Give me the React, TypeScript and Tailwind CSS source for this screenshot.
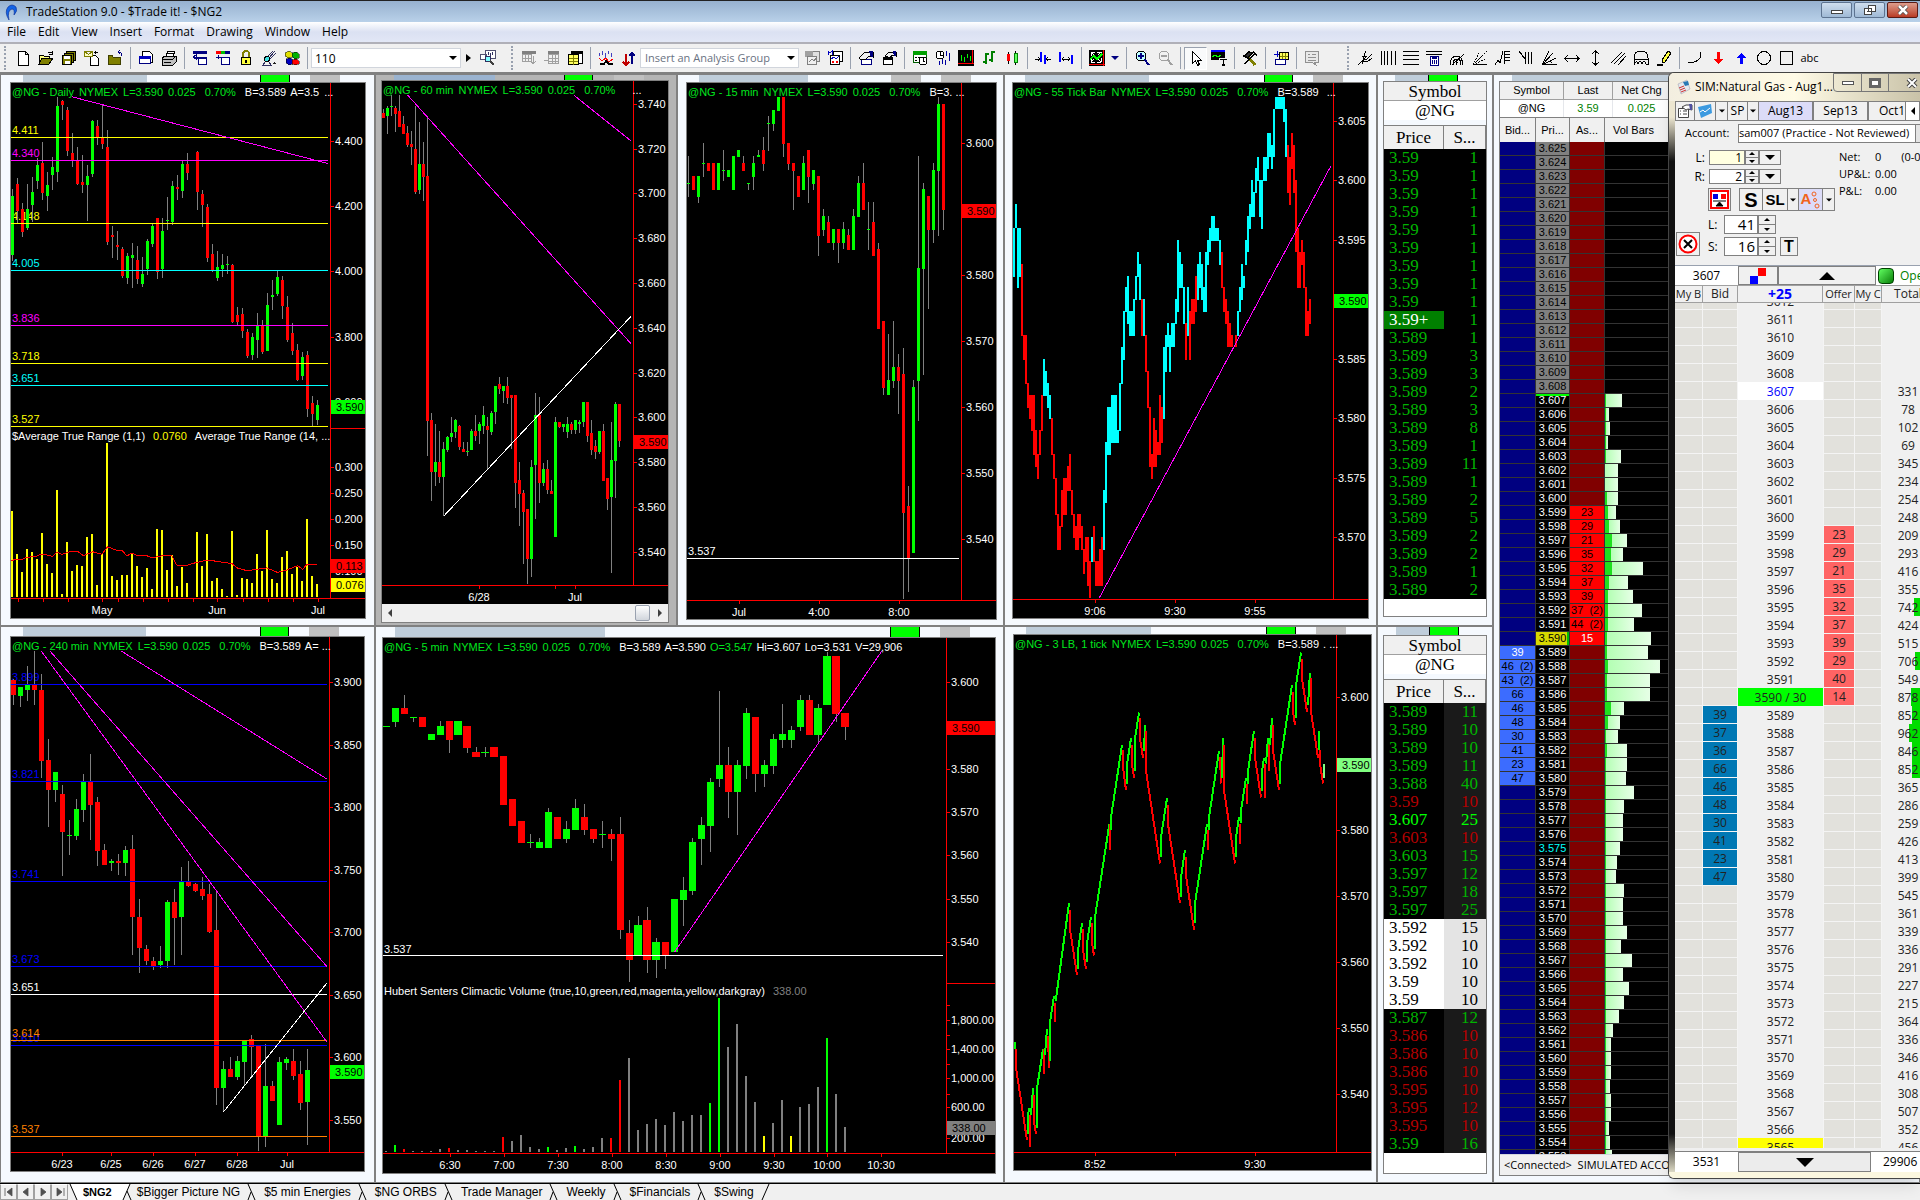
import { CSSProperties, ReactNode } from "react";

/* ---------- shared types and colours ---------- */

type Candle = [x: number, top: number, bottom: number, high: number, low: number, up: 0 | 1];
type Bar = [x: number, top: number, bottom: number, color: string];
type Line = [x1: number, y1: number, x2: number, y2: number, color: string];
type Mark = [pos: number, label: string];
type Level = [y: number, label: string, color: string];
type Tag = [y: number, label: string, fill: string];
type Segment = [gap: number, width: number, color: string];

const GREEN = "#00ff00";
const RED = "#ff0000";
const CYAN = "#00ffff";
const MAGENTA = "#ff00ff";
const YELLOW = "#ffff00";
const GRAY = "#808080";

const STEEL = "#bfcdda";
const SILVER = "#c0c0c0";

/* ---------- chart data, in plot units ---------- */

const dailyCandles: Candle[] = [
  [38, 352, 518, 333, 535, 1], [53, 319, 395, 302, 428, 0], [68, 389, 454, 372, 468, 0], [83, 389, 442, 319, 447, 1],
  [98, 342, 377, 300, 425, 1], [113, 266, 310, 246, 333, 1], [128, 260, 343, 202, 363, 0], [143, 322, 352, 286, 394, 1],
  [158, 272, 293, 244, 335, 1], [173, 101, 285, 76, 314, 1], [188, 87, 97, 84, 139, 0], [203, 112, 227, 104, 240, 0],
  [218, 232, 253, 177, 272, 0], [233, 253, 318, 216, 322, 0], [248, 314, 321, 238, 344, 0], [263, 297, 321, 266, 423, 1],
  [278, 143, 290, 140, 300, 1], [293, 157, 188, 140, 210, 0], [308, 188, 206, 96, 220, 0], [323, 216, 481, 168, 490, 0],
  [338, 462, 467, 437, 526, 0], [353, 489, 495, 451, 531, 0], [368, 501, 576, 496, 582, 0], [383, 521, 581, 512, 599, 1],
  [398, 518, 525, 484, 610, 1], [413, 532, 584, 493, 599, 0], [428, 571, 599, 524, 607, 1], [443, 479, 557, 473, 574, 1],
  [458, 437, 486, 430, 496, 1], [473, 414, 566, 414, 584, 0], [488, 451, 557, 414, 582, 1], [503, 420, 423, 355, 448, 1],
  [518, 325, 426, 311, 433, 1], [533, 328, 333, 294, 364, 0], [548, 263, 339, 255, 357, 1], [563, 263, 287, 232, 308, 0],
  [593, 230, 342, 226, 391, 0], [608, 347, 377, 336, 440, 0], [623, 384, 525, 375, 538, 0], [638, 515, 560, 487, 565, 0],
  [653, 552, 582, 507, 591, 1], [668, 546, 557, 515, 580, 1], [683, 543, 546, 521, 571, 1], [698, 546, 706, 543, 708, 0],
  [713, 686, 706, 664, 714, 0], [728, 683, 730, 666, 750, 0], [743, 734, 801, 725, 806, 0], [758, 748, 798, 736, 812, 1],
  [773, 717, 756, 680, 806, 1], [788, 714, 790, 700, 795, 0], [803, 658, 787, 624, 787, 1], [818, 630, 635, 588, 672, 1],
  [833, 580, 627, 563, 633, 1], [848, 588, 660, 577, 697, 0], [863, 664, 756, 633, 762, 0], [878, 736, 787, 708, 797, 0],
  [893, 784, 867, 767, 871, 0], [908, 804, 857, 790, 867, 1], [923, 798, 949, 787, 972, 0], [938, 932, 963, 913, 997, 0],
  [953, 938, 980, 924, 994, 1],
];

const atrTops: [number, number][] = [
  [36, 1235], [51, 1356], [66, 1406], [81, 1341], [96, 1350], [111, 1369], [126, 1296], [141, 1383], [156, 1408],
  [171, 1176], [186, 1467], [201, 1322], [216, 1403], [231, 1386], [246, 1389], [261, 1308], [276, 1299], [291, 1442],
  [306, 1355], [321, 1044], [336, 1417], [351, 1428], [366, 1414], [381, 1414], [396, 1352], [411, 1389], [426, 1420],
  [441, 1394], [456, 1453], [471, 1285], [486, 1288], [501, 1400], [516, 1358], [531, 1445], [546, 1392], [561, 1436],
  [591, 1294], [606, 1389], [621, 1299], [636, 1431], [651, 1422], [666, 1453], [681, 1473], [696, 1291], [711, 1470],
  [726, 1422], [741, 1425], [756, 1436], [771, 1355], [786, 1403], [801, 1288], [816, 1425], [831, 1436], [846, 1364],
  [861, 1347], [876, 1411], [891, 1392], [906, 1431], [921, 1257], [936, 1417], [951, 1439],
];

const atrAverage =
  "33,1374 48,1370 66,1370 81,1364 105,1363 126,1355 158,1362 171,1350 186,1356 216,1347 233,1348 250,1360 278,1349 306,1356 323,1335 350,1345 366,1345 381,1361 396,1352 411,1360 440,1360 458,1366 486,1360 516,1360 530,1386 561,1387 576,1382 623,1372 696,1382 711,1394 741,1402 756,1400 800,1394 833,1407 860,1400 893,1388 908,1398 921,1384 951,1384";

const hourCandles: Candle[] = [
  [33, 120, 134, 108, 134, 0], [43, 106, 129, 100, 179, 1], [52, 101, 104, 70, 130, 1], [62, 106, 123, 100, 174, 0],
  [72, 115, 159, 70, 160, 0], [82, 151, 179, 130, 180, 0], [92, 176, 210, 157, 215, 0], [101, 207, 215, 170, 266, 0],
  [111, 222, 342, 100, 347, 0], [121, 263, 336, 146, 347, 1], [131, 263, 300, 202, 366, 0], [141, 297, 983, 134, 1080, 0],
  [151, 980, 1126, 960, 1206, 0], [160, 1098, 1126, 990, 1164, 1], [170, 1098, 1140, 1011, 1156, 0], [180, 1061, 1140, 1042, 1250, 1],
  [190, 1028, 1064, 1024, 1070, 1], [199, 1016, 1028, 972, 1042, 1], [209, 980, 1014, 976, 1030, 1], [219, 997, 1056, 995, 1064, 0],
  [229, 1062, 1070, 1042, 1070, 0], [239, 1067, 1070, 1042, 1080, 1], [249, 1011, 1064, 1005, 1064, 1], [258, 1011, 1024, 966, 1038, 0],
  [268, 991, 1011, 986, 1047, 1], [278, 966, 997, 941, 1019, 1], [288, 997, 1008, 972, 1117, 0], [298, 960, 1014, 955, 1022, 1],
  [308, 885, 958, 885, 990, 1], [317, 879, 893, 860, 907, 0], [327, 885, 899, 885, 932, 1], [337, 885, 918, 860, 935, 0],
  [347, 910, 918, 910, 1062, 0], [357, 910, 1156, 910, 1225, 0], [366, 1148, 1187, 1098, 1277, 0], [376, 1184, 1238, 1176, 1382, 0],
  [386, 1229, 1369, 1229, 1438, 0], [396, 1112, 1369, 1092, 1420, 1], [406, 966, 1106, 904, 1257, 1], [415, 966, 1156, 915, 1212, 0],
  [425, 1117, 1156, 1100, 1166, 1], [435, 1117, 1176, 1092, 1187, 0], [445, 1179, 1187, 1148, 1187, 0], [454, 986, 1307, 972, 1307, 1],
  [464, 986, 1000, 986, 1002, 0], [474, 991, 1000, 991, 1014, 1], [484, 991, 1014, 972, 1030, 1], [494, 991, 1008, 986, 1019, 0],
  [504, 980, 1008, 980, 1019, 1], [513, 986, 991, 980, 1016, 1], [523, 930, 986, 930, 1000, 1], [533, 930, 1025, 930, 1042, 0],
  [543, 1016, 1064, 980, 1078, 0], [553, 1053, 1070, 1035, 1089, 0], [562, 1011, 1070, 1011, 1075, 1], [572, 1011, 1151, 990, 1151, 0],
  [582, 1142, 1200, 1142, 1232, 0], [592, 1092, 1195, 986, 1408, 1], [602, 935, 1095, 930, 1198, 1], [611, 935, 1039, 935, 1056, 0],
];

const quarterCandles: Candle[] = [
  [780, 316, 319, 241, 356, 1], [792, 297, 336, 297, 336, 0], [804, 297, 356, 297, 372, 1], [817, 260, 263, 204, 300, 1],
  [829, 260, 283, 260, 283, 0], [841, 260, 336, 260, 336, 0], [853, 260, 336, 260, 336, 1], [866, 280, 284, 224, 311, 1],
  [878, 280, 300, 280, 300, 1], [890, 241, 336, 241, 336, 1], [902, 224, 244, 224, 244, 1], [915, 260, 283, 241, 283, 0],
  [927, 316, 319, 316, 336, 1], [939, 260, 300, 241, 336, 1], [951, 239, 243, 223, 243, 1], [964, 223, 263, 188, 283, 0],
  [976, 148, 151, 130, 227, 1], [988, 111, 151, 111, 171, 1], [1001, 76, 115, 76, 115, 1], [1013, 76, 207, 76, 244, 0],
  [1025, 204, 263, 204, 280, 0], [1037, 260, 284, 260, 392, 0], [1049, 297, 355, 297, 355, 0], [1062, 260, 336, 241, 336, 1],
  [1074, 224, 300, 224, 372, 0], [1086, 280, 319, 280, 336, 1], [1098, 297, 465, 297, 521, 0], [1111, 409, 448, 389, 465, 1],
  [1123, 426, 484, 409, 484, 0], [1135, 445, 484, 445, 504, 1], [1147, 445, 484, 445, 540, 0], [1160, 445, 484, 426, 500, 1],
  [1172, 462, 504, 445, 504, 0], [1184, 409, 504, 389, 504, 1], [1197, 316, 412, 297, 412, 1], [1209, 316, 392, 260, 392, 0],
  [1221, 445, 448, 370, 504, 1], [1233, 426, 521, 370, 521, 0], [1245, 501, 725, 484, 725, 0], [1258, 703, 890, 703, 909, 0],
  [1270, 868, 909, 738, 909, 1], [1282, 832, 871, 703, 890, 1], [1294, 832, 871, 795, 963, 0], [1307, 851, 1240, 778, 1481, 0],
  [1319, 1221, 1366, 1165, 1462, 0], [1331, 888, 1352, 868, 1352, 1], [1343, 554, 871, 241, 983, 1], [1356, 333, 557, 316, 854, 1],
  [1368, 353, 448, 353, 669, 0], [1380, 280, 448, 260, 484, 1], [1392, 95, 283, 76, 465, 1], [1405, 95, 392, 95, 448, 0],
];

const fourHourCandles: Candle[] = [
  [40, 162, 203, 160, 230, 0], [61, 181, 205, 181, 235, 1], [82, 176, 189, 124, 219, 1], [103, 176, 189, 84, 230, 0],
  [124, 189, 380, 146, 427, 0], [145, 378, 460, 322, 560, 0], [166, 411, 460, 411, 492, 1], [187, 470, 573, 446, 692, 0],
  [208, 580, 584, 541, 635, 1], [229, 511, 584, 484, 595, 1], [250, 436, 514, 416, 546, 1], [271, 436, 500, 362, 595, 0],
  [292, 492, 624, 479, 665, 0], [313, 622, 662, 606, 662, 0], [334, 652, 657, 646, 679, 1], [355, 652, 657, 633, 689, 0],
  [376, 622, 657, 611, 692, 1], [397, 619, 803, 581, 906, 0], [418, 803, 887, 754, 954, 0], [439, 889, 922, 879, 933, 0],
  [460, 922, 935, 912, 946, 0], [481, 922, 933, 881, 941, 1], [502, 762, 922, 757, 941, 1], [523, 762, 805, 727, 933, 0],
  [544, 708, 803, 668, 906, 1], [565, 708, 719, 652, 722, 0], [586, 714, 733, 711, 735, 0], [607, 727, 746, 695, 757, 0],
  [628, 741, 843, 714, 846, 0], [649, 838, 1265, 735, 1311, 0], [670, 1214, 1265, 1192, 1330, 1], [691, 1214, 1235, 1181, 1235, 0],
  [712, 1192, 1235, 1179, 1244, 1], [733, 1138, 1195, 1135, 1260, 1], [754, 1133, 1154, 1122, 1233, 0], [775, 1152, 1397, 1152, 1435, 0],
  [796, 1260, 1397, 1146, 1425, 1], [817, 1260, 1300, 1246, 1300, 0], [838, 1195, 1365, 1181, 1365, 1], [859, 1187, 1198, 1181, 1217, 1],
  [880, 1192, 1233, 1160, 1244, 0], [901, 1228, 1305, 1192, 1325, 0], [922, 1217, 1303, 1160, 1419, 1],
];

const fiveMinCandles: Candle[] = [
  [40, 287, 290, 287, 290, 1], [62, 238, 276, 238, 289, 1], [84, 238, 253, 203, 253, 0], [106, 262, 265, 262, 276, 1],
  [128, 262, 290, 262, 290, 0], [150, 308, 324, 308, 324, 1], [172, 287, 311, 273, 311, 1], [194, 273, 324, 273, 360, 0],
  [216, 273, 311, 273, 311, 1], [238, 287, 346, 287, 360, 0], [260, 357, 370, 343, 370, 0], [282, 357, 360, 343, 370, 1],
  [304, 343, 370, 343, 370, 0], [327, 368, 500, 368, 500, 0], [349, 484, 557, 484, 557, 0], [371, 543, 603, 543, 603, 0],
  [393, 600, 603, 579, 616, 1], [415, 600, 616, 589, 616, 1], [437, 519, 616, 508, 616, 1], [459, 533, 592, 533, 592, 0],
  [481, 565, 592, 543, 603, 1], [503, 508, 568, 484, 568, 1], [525, 533, 568, 497, 581, 0], [547, 565, 592, 565, 603, 0],
  [569, 579, 582, 543, 616, 1], [591, 579, 592, 565, 652, 0], [613, 579, 838, 533, 862, 0], [635, 846, 919, 811, 979, 0],
  [657, 825, 906, 800, 906, 1], [679, 811, 919, 776, 954, 0], [701, 871, 919, 860, 968, 1], [724, 871, 908, 871, 943, 0],
  [746, 754, 898, 754, 898, 1], [768, 730, 757, 695, 827, 1], [790, 600, 733, 589, 743, 1], [812, 554, 592, 533, 662, 1],
  [834, 438, 557, 427, 627, 1], [856, 392, 430, 192, 451, 1], [878, 392, 465, 343, 535, 0], [900, 392, 465, 378, 581, 1],
  [922, 251, 395, 238, 430, 1], [944, 262, 416, 262, 465, 0], [966, 392, 416, 378, 451, 1], [988, 322, 395, 308, 416, 1],
  [1010, 308, 324, 227, 346, 1], [1032, 297, 324, 287, 346, 1], [1054, 216, 290, 203, 300, 1], [1076, 216, 311, 203, 311, 0],
  [1098, 238, 311, 227, 333, 1], [1120, 97, 230, 87, 230, 1], [1142, 97, 253, 97, 276, 0], [1164, 251, 290, 251, 324, 0],
];

const volumeBars: Bar[] = (
  [
    [40, 1436], [62, 1419, GREEN], [84, 1430, RED], [106, 1436], [128, 1436], [150, 1436], [172, 1430], [194, 1427, RED],
    [216, 1433], [238, 1433], [260, 1436], [282, 1436], [304, 1436], [325, 1398, RED], [347, 1408], [370, 1392],
    [392, 1425], [414, 1430], [436, 1425, GREEN], [458, 1433], [480, 1427], [502, 1422, GREEN], [524, 1430], [546, 1425],
    [568, 1400], [590, 1400, RED], [612, 1244, RED], [634, 1184], [656, 1379], [678, 1363], [700, 1349], [722, 1365],
    [744, 1330], [766, 1354], [788, 1338], [810, 1338], [832, 1306, GREEN], [855, 1022, GREEN], [877, 1154], [899, 1092],
    [921, 1233], [943, 1303], [965, 1395, YELLOW], [987, 1360], [1009, 1298], [1031, 1395, YELLOW], [1053, 1317],
    [1075, 1308], [1097, 1263], [1119, 1130, GREEN], [1141, 1281], [1163, 1371],
  ] as [number, number, string?][]
).map(([x, top, color]) => [x, top, 1438, color ?? GRAY]);

// runs of one colour: first x, then top/bottom pairs six units apart
const tickRuns: [string, number, [number, number][]][] = [
  [CYAN, 41, [[443, 580], [375, 443], [443, 610], [443, 580]]],
  [RED, 66, [[543, 745], [742, 812], [742, 879], [876, 946], [910, 977], [910, 1011], [910, 1077], [1008, 1111], [1075, 1145], [1008, 1077], [910, 1011]]],
  [CYAN, 132, [[809, 912], [843, 912], [876, 946], [910, 977]]],
  [RED, 156, [[974, 1077], [1075, 1145], [1142, 1245], [1243, 1344], [1276, 1344], [1176, 1279], [1142, 1245], [1142, 1245], [1108, 1178], [1075, 1178], [1176, 1245], [1243, 1310], [1276, 1344], [1243, 1344], [1243, 1310], [1276, 1344], [1341, 1411], [1308, 1378], [1308, 1445], [1375, 1478]]],
  [CYAN, 276, [[1308, 1378]]],
  [RED, 282, [[1276, 1378], [1375, 1445], [1375, 1445], [1341, 1445], [1308, 1445]]],
  [CYAN, 312, [[1176, 1344], [1042, 1212], [944, 1077], [944, 1077], [910, 1044], [910, 1044], [910, 1044], [1008, 1044], [876, 1011], [776, 879], [675, 812], [608, 677], [577, 711], [675, 745], [675, 745], [641, 745], [577, 644], [510, 580], [543, 644]]],
  [RED, 426, [[641, 745]]],
  [CYAN, 432, [[641, 745]]],
  [RED, 438, [[742, 846], [843, 946], [944, 1111], [1075, 1145], [974, 1111], [1008, 1111], [1042, 1077], [910, 1077], [944, 1044]]],
  [CYAN, 492, [[776, 977], [742, 846], [708, 776], [742, 846], [708, 776], [708, 776], [641, 711], [476, 677], [510, 610], [543, 610], [608, 711]]],
  [RED, 558, [[708, 812]]],
  [CYAN, 564, [[608, 745]]],
  [RED, 570, [[675, 812], [641, 711], [641, 711], [577, 677]]],
  [CYAN, 594, [[543, 644], [510, 610], [543, 644], [608, 677], [510, 677], [476, 546], [443, 510], [409, 479], [409, 479], [443, 479], [443, 479], [476, 546]]],
  [RED, 666, [[510, 610], [608, 677], [641, 711], [675, 776], [708, 776], [742, 776]]],
  [RED, 708, [[742, 776]]],
  [CYAN, 714, [[675, 745], [608, 677], [543, 644], [577, 610], [476, 546], [409, 510], [375, 445], [308, 412], [342, 412], [274, 345], [244, 310], [308, 412], [308, 445], [244, 310], [244, 310], [177, 277], [177, 244], [210, 277], [110, 244], [76, 110], [76, 110], [76, 110], [76, 110], [76, 146], [110, 244]]],
  [RED, 864, [[210, 345], [244, 378], [177, 277], [210, 345], [308, 510], [443, 610], [510, 610], [476, 546], [510, 610], [608, 745], [675, 745], [641, 711]]],
];

const tickBars: Bar[] = tickRuns.flatMap(([color, start, spans]) =>
  spans.map(([top, bottom], i): Bar => [start + i * 6, top, bottom, color])
);

const lineBreaks: [string, string][] = [
  [GREEN, "45,1142 45,1160"], [RED, "48,1160 48,1210 81,1406"], [GREEN, "84,1390 84,1340 87,1320"], [RED, "90,1338 90,1425"],
  [GREEN, "93,1338 99,1266"], [RED, "102,1285 102,1355 108,1390"], [GREEN, "111,1372 111,1266 129,1160"], [RED, "132,1160 132,1228"],
  [GREEN, "135,1175 141,1106"], [RED, "144,1124 147,1212"], [GREEN, "150,1193 150,1087 162,1016"], [RED, "165,1034 165,1086"],
  [GREEN, "167,1030 207,766"], [RED, "210,784 210,836 231,960"], [GREEN, "234,943 234,892 246,820"], [RED, "249,836 249,892 258,943"],
  [GREEN, "261,925 261,873 273,803"], [RED, "276,820 276,873 282,907"], [GREEN, "285,890 285,803 328,552"], [RED, "330,552 330,621"],
  [GREEN, "333,568 333,533 366,338"], [RED, "369,352 370,405 378,460"], [GREEN, "381,442 381,390 393,320"], [RED, "396,338 396,390 402,426"],
  [GREEN, "405,408 405,320 417,250"], [RED, "420,266 420,320 429,372"], [GREEN, "432,354 435,285"], [RED, "438,300 438,408 480,658"],
  [GREEN, "483,640 483,587 501,482"], [RED, "504,500 504,552 540,765"], [GREEN, "543,748 543,695 555,622"], [RED, "558,640 558,692 582,837"],
  [GREEN, "585,820 585,766 621,552"], [RED, "624,568 624,621"], [GREEN, "627,568 627,533 657,354"], [RED, "660,370 663,442"],
  [GREEN, "666,426 669,320"], [RED, "672,338 672,460 705,658"], [GREEN, "708,640 708,587 717,533"], [RED, "720,552 720,605"],
  [GREEN, "723,550 723,515 738,427"], [RED, "741,443 741,497"], [GREEN, "744,443 744,408 762,300"], [RED, "765,320 765,372 783,480"],
  [GREEN, "786,462 786,408 792,374"], [RED, "795,390 795,480"], [GREEN, "798,388 804,320"], [RED, "807,335 807,408"],
  [GREEN, "810,338 816,266"], [RED, "819,284 819,352 837,460"], [GREEN, "840,443 840,390 876,176"], [RED, "879,195 879,248 885,283"],
  [GREEN, "888,266 888,176 903,88"], [RED, "906,106 906,158 921,248"], [GREEN, "924,230 930,142"], [RED, "933,158 933,248 954,372"],
  [GREEN, "957,352 957,300"], [RED, "960,352 960,388 969,442"], ["#80ff80", "972,426 972,390"],
];

/* ---------- chart ---------- */

interface ChartProps {
  label: string;
  view: [number, number, number, number];
  plot: [ox: number, oy: number, sx: number, sy: number];
  name: string;
  quote?: ReactNode;
  more?: string;
  study?: ReactNode;
  studyTop?: number;
  axisX: number;
  axisY: number;
  split?: number;
  candles?: Candle[];
  bodyWidth?: number;
  bars?: Bar[];
  barWidth?: number;
  lines?: Line[];
  levels?: Level[];
  prices: Mark[];
  times: Mark[];
  tags: Tag[];
  levelEnd?: number;
  children?: ReactNode;
}

const Chart = ({
  label, view, plot, name, quote, more, study, studyTop = 0, axisX, axisY, split, candles = [], bodyWidth = 9,
  bars = [], barWidth = 5, lines = [], levels = [], prices, times, tags, levelEnd = 0, children,
}: ChartProps) => {
  const [vx, vy, vw, vh] = view;
  const [ox, oy, sx, sy] = plot;
  const px = (x: number) => Math.round(ox + x / sx);
  const py = (y: number) => Math.round(oy + y / sy);
  const ax = px(axisX);
  const ay = py(axisY);

  return (
    <div className="relative flex min-h-0 flex-1 overflow-hidden bg-black font-['Liberation_Sans',sans-serif] text-[11px] text-white">
      <svg
        viewBox={`${vx} ${vy} ${vw} ${vh}`}
        preserveAspectRatio="xMinYMin meet"
        className="h-full w-full"
        role="img"
        aria-label={label}
      >
        {levels.map(([y, text, color]) => (
          <text key={y} x={vx + 1} y={py(y) - 3} fill={color}>
            {text}
          </text>
        ))}
        <g shapeRendering="crispEdges">
          <g transform={`translate(${ox} ${oy}) scale(${1 / sx} ${1 / sy})`}>
            {candles.map(([x, top, bottom, high, low, up]) => (
              <g key={x} fill={up ? GREEN : RED}>
                <line x1={x} x2={x} y1={high} y2={low} stroke={GRAY} vectorEffect="non-scaling-stroke" />
                <rect x={x - bodyWidth / 2} y={top} width={bodyWidth} height={bottom - top} />
              </g>
            ))}
            {bars.map(([x, top, bottom, color]) => (
              <rect key={x} x={x - barWidth / 2} y={top} width={barWidth} height={bottom - top} fill={color} />
            ))}
            {levels.map(([y, , color]) => (
              <line key={y} x1={0} x2={levelEnd} y1={y} y2={y} stroke={color} vectorEffect="non-scaling-stroke" />
            ))}
            {lines.map(([x1, y1, x2, y2, color]) => (
              <line key={x1 + y1} x1={x1} y1={y1} x2={x2} y2={y2} stroke={color} vectorEffect="non-scaling-stroke" />
            ))}
            {children}
          </g>
          <g stroke={RED}>
            <path d={`M${ax + 0.5} ${vy}V${ay}M${vx} ${ay + 0.5}H${vx + vw}`} />
            {split && <path d={`M${ax} ${py(split) + 0.5}H${vx + vw}`} />}
            {prices.map(([y]) => (
              <path key={y} d={`M${ax} ${py(y) + 0.5}h4`} />
            ))}
            {times.map(([x]) => (
              <path key={x} d={`M${px(x) + 0.5} ${ay}v4`} />
            ))}
          </g>
        </g>
        {prices.map(([y, text]) => (
          <text key={y} x={ax + 5} y={py(y) + 4} fill="white">
            {text}
          </text>
        ))}
        {times.map(([x, text]) => (
          <text key={x} x={px(x)} y={ay + 16} fill="white" textAnchor="middle">
            {text}
          </text>
        ))}
        {tags.map(([y, text, fill]) => (
          <g key={text}>
            <rect x={ax + 1} y={py(y) - 7} width={vx + vw - ax} height={14} fill={fill} />
            <text x={ax + 6} y={py(y) + 4} fill="black">
              {text}
            </text>
          </g>
        ))}
      </svg>
      <h2 className="absolute left-px top-0.5 flex gap-[5px] whitespace-pre leading-[14px] text-[#00e61e]">
        <span>{name}</span>
        <span>NYMEX</span>
        <span>L=3.590</span>
        <span>0.025</span>
        <span className="ml-1">0.70%</span>
        <span className="ml-1 flex gap-1 text-white">{quote}</span>
        {more && <span className="text-white">{more}</span>}
      </h2>
      {study && (
        <div className="absolute left-px flex gap-2 whitespace-pre leading-[14px]" style={{ top: studyTop }}>
          {study}
        </div>
      )}
    </div>
  );
};

/* ---------- child window frame ---------- */

interface FrameProps {
  strip: Segment[];
  className: string;
  stripClass?: string;
  children: ReactNode;
}

const Frame = ({ strip, className, stripClass = "h-[7px]", children }: FrameProps) => (
  <section className={`flex min-h-0 min-w-0 flex-col overflow-hidden border border-[#808080] ${className}`}>
    <div className={`flex shrink-0 ${stripClass}`}>
      {strip.map(([gap, width, color], i) => (
        <span
          key={i}
          className={color === GREEN ? "shrink-0 border-x border-black" : "shrink-0"}
          style={{ marginLeft: gap, width, background: color }}
        />
      ))}
    </div>
    <div className="flex min-h-0 flex-1 flex-col border border-[#808080]">{children}</div>
  </section>
);

/* ---------- toolbar icons, 16 x 16 ---------- */

const icons: Record<string, ReactNode> = {
  new: <path d="M3 1h7l3 3v11H3zM10 1v3h3" fill="white" stroke="black" />,
  open: (
    <>
      <path d="M1 14V5h4l1 1h5v2" fill="#ffff80" stroke="black" />
      <path d="M1 14l3-6h11l-4 6z" fill="#808000" stroke="black" />
      <path d="M10 3q2-2 4 0M14 1v3h-3" fill="none" stroke="black" />
    </>
  ),
  saveAll: (
    <>
      <path d="M5.500 1.500h9v9h-9z" fill="#808000" stroke="black" />
      <path d="M3.500 3.500h9v9h-9z" fill="#808000" stroke="black" />
      <path d="M1.500 5.500h9v9h-9z" fill="#808000" stroke="black" />
      <path d="M3 6h6v3H3zM4 11h5v3H4z" fill="white" />
    </>
  ),
  mailDoc: (
    <>
      <path d="M6.500 5.500h5l3 3v7h-8z" fill="white" stroke="black" />
      <path d="M.5 1.500h8v5h-8zl4 3 4-3" fill="#ffffc0" stroke="#808000" />
      <path d="M11 1v3M9.500 2.500h4" stroke="black" />
    </>
  ),
  folderUp: (
    <>
      <path d="M1 14V6l1-1h3l1 2h7v7z" fill="#808000" stroke="#404000" />
      <path d="M15 6q0-4-4-4M13 0l-2 2 2 2" fill="none" stroke="#000080" />
    </>
  ),
  pageSetup: (
    <>
      <path d="M4 1h7l3 3v8H4z" fill="white" stroke="black" />
      <path d="M1.500 6.500h11v7h-11z" fill="white" stroke="#000080" />
      <path d="M1 6h12v3H1z" fill="#0000c0" />
    </>
  ),
  print: (
    <>
      <path d="M5 6l2-5h7l-2 5z" fill="white" stroke="black" />
      <path d="M1 8l3-2h11v6l-3 3H1z" fill="#c0c0c0" stroke="black" />
      <path d="M1 9h11M12 9l3-3M3 12h7M7 3h5" stroke="black" fill="none" />
    </>
  ),
  windowTop: (
    <>
      <path d="M1 1h14v3H1zM5 7h10v2H5z" fill="#000080" />
      <path d="M6.500 8.500h8v6h-8zM1 7l3-2v4zM3 7h3" fill="white" stroke="#000080" />
    </>
  ),
  windowTopColor: (
    <>
      <path d="M1 1h14v3H1z" fill="#000080" />
      <path d="M1 1h5v3H1z" fill={RED} />
      <path d="M6 1h4v3H6z" fill="#00c000" />
      <path d="M6.500 7.500h8v7h-8zM1 7h5M3 5v4" fill="white" stroke="#000080" />
    </>
  ),
  lock: (
    <>
      <path d="M5 8V4q0-3 3-3t3 3v4" fill="none" stroke="#808000" strokeWidth="2" />
      <path d="M3.500 7.500h9v7h-9z" fill="#ffff40" stroke="black" />
      <path d="M7 10h2v3H7z" fill="black" />
    </>
  ),
  satellite: (
    <>
      <path d="M2 15l4-6 4 6zM8 8l6-7M6 7l6-6M9 9l6-6" fill="none" stroke="#303060" />
      <circle cx="6" cy="9" r="2.500" fill="#40e0e0" stroke="black" />
      <path d="M11 14l3-3 1 3z" fill="#202020" />
    </>
  ),
  cubes: (
    <>
      <path d="M1 3l4-2 3 2v4L4 8 1 6z" fill="#e0e000" stroke="black" strokeWidth=".5" />
      <path d="M8 3l4-1 3 2v4l-4 1-3-2z" fill="#00b000" stroke="black" strokeWidth=".5" />
      <path d="M2 9l4-1 3 2v4l-4 1-3-2z" fill="#0000c0" stroke="black" strokeWidth=".5" />
      <path d="M8 10l4-1 3 2v3l-4 1-3-1z" fill={RED} stroke="black" strokeWidth=".5" />
    </>
  ),
  findSymbol: (
    <>
      <path d="M5.500.5h10v8h-10zM.5 4.500h6v5h-6z" fill="white" stroke="#505070" />
      <path d="M8 2v3M10 3v3M12 2v3" stroke="#303060" />
      <circle cx="8" cy="9" r="3" fill="#80ffff" stroke="#303060" />
      <path d="M10 11l4 4" stroke="#404040" strokeWidth="2" />
    </>
  ),
  gridDown: (
    <>
      <path d="M1 1h14v3H1z" fill={GRAY} />
      <path d="M1.500 4.500h9v7h-9zM4 5v6M7 5v6M2 8h8M12 6v7M10 11l2 3 3-3" fill="none" stroke="#a0a0a0" />
    </>
  ),
  gridLeft: (
    <>
      <path d="M4 1h11v3H4z" fill={GRAY} />
      <path d="M4.500 4.500h10v9h-10zM8 5v8M11 5v8M5 8h9M5 11h9M0 10h5" fill="none" stroke="#a0a0a0" />
    </>
  ),
  gridYellow: (
    <>
      <path d="M4.500 1.500h11v12h-11z" fill="white" stroke="black" />
      <path d="M4 1h12v3H4z" fill="black" />
      <path d="M1.500 4.500h10v10h-10z" fill="#ffff60" stroke="black" />
      <path d="M6 5v10M2 8h9M2 11h9" stroke="#808000" />
    </>
  ),
  zigzag: (
    <>
      <path d="M1 6V3M4 5V1M7 8V3M10 4V1M13 7V3" stroke="#4040c0" />
      <path d="M1 8l3 3 4-3 3 4 4-3" fill="none" stroke={RED} />
      <path d="M2 14h4l2-3 3 3h4" fill="none" stroke="black" strokeWidth="1.500" />
    </>
  ),
  upDown: (
    <>
      <path d="M5 15V4M2 12l3 3 3-3" fill="none" stroke="#c00000" strokeWidth="1.500" />
      <path d="M11 14V3M8 6l3-3 3 3" fill="none" stroke="#000080" strokeWidth="1.500" />
    </>
  ),
  saveGroup: (
    <>
      <path d="M7.500 1.500h8v10h-8z" fill="#e0e0e0" stroke={GRAY} />
      <path d="M1 1h8v6H1z" fill="#a0a0a0" />
      <path d="M3.500 6.500h9v8h-9zM5 12l3-3 2 2 2-3" fill="#f0f0f0" stroke={GRAY} />
    </>
  ),
  manageGroup: (
    <>
      <path d="M6.500 1.500h9v10h-9z" fill="white" stroke="black" />
      <path d="M1 5V1l2 2 2-2v4" fill="none" stroke="#0000c0" />
      <path d="M3.500 5.500h9v9h-9z" fill="white" stroke="black" />
      <path d="M4 9l3-2 2 2 3-3" fill="none" stroke="#0000c0" />
      <path d="M5 13l1-2 1 2M9 13l1-2 1 2" fill="none" stroke={RED} />
    </>
  ),
  handForm: (
    <>
      <path d="M3.500 9.500h10v5h-10z" fill="white" stroke="#000080" />
      <path d="M1 8l5-5 2-1h7v5l-4-1-3 3H2z" fill="#f0f0f0" stroke="black" />
      <path d="M11 1h4v6h-2z" fill="#000080" />
    </>
  ),
  handFormDark: (
    <>
      <path d="M2.500 8.500h9v6h-9z" fill="white" stroke="black" />
      <path d="M2 7h10v3H2z" fill="black" />
      <path d="M4 6l4-4h7v4l-4-1-2 3z" fill="#f0f0f0" stroke="black" />
      <path d="M12 1h3v5h-2z" fill="#000080" />
    </>
  ),
  calendarClock: (
    <>
      <path d="M1.500 2.500h13v10h-13z" fill="white" stroke="#006000" />
      <path d="M1 1h14v4H1z" fill="#00a000" />
      <path d="M3 7h2M6 7h2M3 10h2" stroke="black" />
      <circle cx="11" cy="11" r="4" fill="white" stroke="black" />
      <path d="M11 8v3h2" fill="none" stroke="black" />
    </>
  ),
  clockBars: (
    <>
      <circle cx="5" cy="5" r="4" fill="white" stroke="black" />
      <path d="M5 2v3h3" fill="none" stroke="black" />
      <path d="M11 1v5M14 3v8M4 11v4M7 9v5M10 10v5" stroke="#0000a0" />
    </>
  ),
  blackChart: (
    <>
      <path d="M0 0h16v16H0z" fill="black" />
      <path d="M3 5v6M6 7v5M9 4v4M12 6v5" stroke={GREEN} />
      <path d="M14.500 0v13.500M0 13.500h16" stroke={RED} fill="none" />
    </>
  ),
  barChart: <path d="M5 3v11M2 12h3M5 4h3M11 1v11M8 10h3M11 2h3" stroke="#008000" strokeWidth="1.500" />,
  candleChart: (
    <>
      <path d="M4.500 2v12M11.500 1v14" stroke="black" />
      <path d="M3 4h3v7H3z" fill={RED} />
      <path d="M10 3h3v9h-3z" fill="#60ff60" stroke="#008000" />
    </>
  ),
  narrow: (
    <>
      <path d="M6 2v10M10 5v9" stroke="#0000ff" strokeWidth="1.500" />
      <path d="M0 9h5M3 7l2 2-2 2M16 9h-5M13 7l-2 2 2 2" fill="none" stroke="black" />
    </>
  ),
  widen: (
    <>
      <path d="M2 2v10M14 5v9" stroke="#0000ff" strokeWidth="1.500" />
      <path d="M4 9h8M6 7L4 9l2 2M10 7l2 2-2 2" fill="none" stroke="black" />
    </>
  ),
  fit: (
    <>
      <path d="M0 0h16v16H0z" fill="black" />
      <path d="M2 2h4M2 2v4M12 2H8M12 2v4M2 12h4M2 12V8M12 12H8M12 12V8M2 2l3 3M12 2L9 5M2 12l3-3M12 12L9 9" stroke="white" />
      <path d="M1 9l4-3 3 3 5-5" fill="none" stroke={GREEN} strokeWidth="1.500" />
      <path d="M14.500 0v16M0 14.500h16" stroke={RED} />
    </>
  ),
  zoomIn: (
    <>
      <circle cx="7" cy="6" r="5" fill="#c0ffff" stroke="black" />
      <path d="M7 3v6M4 6h6" stroke="#000080" strokeWidth="1.500" />
      <path d="M10.500 9.500L15 15" stroke="#000080" strokeWidth="2" />
    </>
  ),
  zoomOut: (
    <>
      <circle cx="7" cy="6" r="5" fill="#f0f0f0" stroke="#a0a0a0" />
      <path d="M4 6h6" stroke="#a0a0a0" strokeWidth="1.500" />
      <path d="M10.500 9.500L15 15" stroke="#a0a0a0" strokeWidth="2" />
    </>
  ),
  pointer: <path d="M4.500 1.500v12l3-3 2 5 2-1-2-4h4z" fill="white" stroke="black" />,
  textTool: (
    <>
      <path d="M0 1h14v9H0z" fill="black" />
      <path d="M0 0h14v2H0z" fill="#0000ff" />
      <path d="M1 7l3-2 3 2 3-2" fill="none" stroke={GREEN} />
      <path d="M8 8h8v8H8z" fill="#f0f0f0" />
      <path d="M9 9.500h7M12.500 9v6M11 15h3" stroke="black" strokeWidth="1.500" />
    </>
  ),
  hammer: (
    <>
      <path d="M13 15L5 6" stroke="#808000" strokeWidth="3" />
      <path d="M2 6l5-4 3 1-4 5zM3 14L13 3M11 2l4 3" fill="#303030" stroke="black" strokeWidth="1.500" />
    </>
  ),
  addGrid: (
    <>
      <path d="M4 1v6M1 4h6" stroke="#0000c0" />
      <path d="M6.500 2.500h9v7h-9z" fill="#ffff60" stroke="black" />
      <path d="M9 3v6M12 3v6M7 6h8" stroke="#808000" />
      <path d="M2.500 9.500h10v5h-10z" fill="white" stroke="#000080" />
    </>
  ),
  note: <path d="M1.500 1.500h13v11h-4l2 3-4-3h-7zM4 4h2M4 7h8M4 10h8M8 4h4" fill="#e8e8e8" stroke="#909090" />,
  pitchfork: <path d="M1 15l9-9M6 14q-1-4 2-6M5 6l5 1M9 1L6 8l3 2 6-6M15 8l-5 4-4-1" fill="none" stroke="black" />,
  timeLines: <path d="M1 1v14M4 1v14M7 1v14M11 1v14M15 1v14" stroke="black" />,
  priceLines: <path d="M0 1.500h16M0 5.500h16M0 9.500h16M0 14.500h16" stroke="black" />,
  calcLines: (
    <>
      <path d="M0 1.500h16M0 4.500h16" stroke="black" />
      <path d="M4.500 6.500h8v9h-8z" fill="white" stroke="#000080" />
      <path d="M6 8h5M6 11h1M8 11h1M10 11h1M6 13h1M8 13h1M10 13h1" stroke="#000080" strokeWidth="1.500" />
    </>
  ),
  arcs: <path d="M1 15q0-9 7-9 5 0 6 9M4 15q0-6 4-6t4 6M7 15q0-3 2-3M3 15L15 4" fill="none" stroke="black" />,
  dashFan: (
    <>
      <path d="M1 14.500h14" stroke="black" />
      <path d="M1 15L15 1M1 15l14-7M1 15l6-12" fill="none" stroke="black" strokeDasharray="2 1" />
    </>
  ),
  extension: <path d="M0 15l3-5 2 3 3-12M9 1h6M9 4h6M9 7h6M9 10h6M9 1v13" fill="none" stroke="black" />,
  speedLines: <path d="M1 1l6 8M7 2v12M10 2v12M13 2v12M16 2v12" fill="none" stroke="black" />,
  gannFan: <path d="M1 14.500h15M1 15L15 8M1 15L12 3M1 15L8 1M9 11l2 2" fill="none" stroke="black" />,
  horizontal: <path d="M1 8.500h14M4 5L1 8.500 4 12M12 5l3 3.500-3 3.500" fill="none" stroke="black" />,
  vertical: <path d="M8.500 1v14M5 4l3.500-3L12 4M5 12l3.500 3 3.500-3" fill="none" stroke="black" />,
  channel: <path d="M1 13L12 2M4 14L15 3M8 15l8-9" fill="none" stroke="black" />,
  cycles: <path d="M1 15V8q0-7 7-7t7 7v7M1 15q2-6 4-1 2-5 4 0 2-5 4 0l2 1M1 9h14" fill="none" stroke="black" />,
  pencil: (
    <>
      <path d="M6 10l6-9 3 2-6 9-3 1z" fill="#ffff40" stroke="black" />
      <path d="M1 14.500h6" stroke="black" strokeWidth="2" />
    </>
  ),
  arc: <path d="M14 2q1 8-7 10H1" fill="none" stroke="black" />,
  arrowDown: <path d="M7 2h3v7h3l-4.500 5L4 9h3z" fill={RED} />,
  arrowUp: <path d="M7 14h3V8h3L8.500 3 4 8h3z" fill="#0000ff" />,
  ellipse: <circle cx="8" cy="8" r="6.500" fill="none" stroke="black" />,
  rectangle: <path d="M1.500 1.500h12v13h-12z" fill="none" stroke="black" />,
};

const Tool = ({ name, active }: { name: string; active?: boolean }) => (
  <button
    type="button"
    aria-label={name}
    className={`flex h-[23px] w-[23px] shrink-0 items-center justify-center ${active ? "border border-t-gray-400 border-l-gray-400 border-white bg-gray-50" : ""}`}
  >
    <svg viewBox="0 0 16 16" className="h-4 w-4 shrink-0" shapeRendering="crispEdges">
      {icons[name]}
    </svg>
  </button>
);

const Tools = ({ names }: { names: string[] }) => (
  <>
    {names.map((name) => (
      <Tool key={name} name={name} />
    ))}
  </>
);

const Divider = () => (
  <span className="flex w-2 shrink-0 justify-center">
    <span className="h-[22px] border-l border-gray-400" />
  </span>
);

const Grip = ({ className = "" }: { className?: string }) => (
  <span className={`h-6 shrink-0 border-l-2 border-dotted border-gray-400 ${className}`} />
);

const Caret = ({ className = "h-1 w-2" }: { className?: string }) => (
  <svg viewBox="0 0 8 4" className={className}>
    <path d="M0 0h8L4 4z" fill="currentColor" />
  </svg>
);

/* ---------- top bars ---------- */

const TitleBar = () => (
  <header className="flex h-[22px] shrink-0 items-center border-t border-[#222] bg-linear-to-b from-[#97b1cf] to-[#b9d1e9] pl-1 text-[12px]">
    <svg viewBox="0 0 14 18" className="h-[18px] w-3.5">
      <path d="M5 17Q0 9 4 4q4-4 8 0 2 4-2 8 1-6-2-6-5 1-3 11z" fill="#1464e6" stroke="#0a2a90" strokeWidth=".6" />
    </svg>
    <h1 className="ml-2">TradeStation 9.0 - $Trade it! - $NG2</h1>
    <div className="ml-auto flex gap-0.5 self-start pr-0.5 pt-px">
      <button type="button" aria-label="Minimize" className="flex h-4 w-[31px] items-center justify-center rounded-xs border border-[#5d7390] bg-linear-to-b from-[#cfdeee] to-[#9fb9d5]">
        <span className="mt-1 h-1 w-3 border border-[#444] bg-white" />
      </button>
      <button type="button" aria-label="Restore" className="flex h-4 w-[31px] items-center justify-center rounded-xs border border-[#5d7390] bg-linear-to-b from-[#cfdeee] to-[#9fb9d5]">
        <svg viewBox="0 0 14 12" className="h-3 w-3.5" shapeRendering="crispEdges">
          <path d="M5.500 1.500h7v6h-7zM1.500 4.500h7v6h-7zM4 7.500h2" fill="white" stroke="#444" />
        </svg>
      </button>
      <button type="button" aria-label="Close" className="flex h-4 w-[31px] items-center justify-center rounded-xs border border-[#5a1a14] bg-linear-to-b from-[#dc9c8c] to-[#b83a24]">
        <svg viewBox="0 0 12 10" className="h-2.5 w-3">
          <path d="M2 1l8 8M10 1L2 9" stroke="#444" strokeWidth="4" />
          <path d="M2 1l8 8M10 1L2 9" stroke="white" strokeWidth="2.500" />
        </svg>
      </button>
    </div>
  </header>
);

const menus = ["File", "Edit", "View", "Insert", "Format", "Drawing", "Window", "Help"];

const MenuBar = () => (
  <nav className="flex h-5 shrink-0 items-center gap-3 bg-linear-to-b from-white via-[#dbe1f2] to-[#e2e7f6] pl-[7px] text-[12px] leading-5">
    {menus.map((menu) => (
      <button key={menu} type="button">
        {menu}
      </button>
    ))}
  </nav>
);

const ToolBar = () => (
  <div className="flex h-8 shrink-0 items-center border-b-2 border-t-2 border-b-[#808080] border-t-[#b0b0b8] bg-[#f0f0f0] pl-1 text-[12px]">
    <Grip className="mr-[5px]" />
    <Tools names={["new", "open", "saveAll", "mailDoc", "folderUp"]} />
    <Divider />
    <Tools names={["pageSetup", "print"]} />
    <Divider />
    <Tools names={["windowTop", "windowTopColor", "lock", "satellite", "cubes"]} />
    <Divider />
    <label className="relative flex shrink-0 items-center">
      <input aria-label="Symbol" defaultValue="110" className="h-5 w-[150px] border border-gray-300 bg-white px-[3px]" />
      <Caret className="absolute right-1 h-1 w-2" />
    </label>
    <svg viewBox="0 0 5 8" className="mx-[5px] h-2 w-[5px] shrink-0">
      <path d="M0 0v8l5-4z" />
    </svg>
    <Tools names={["findSymbol"]} />
    <Grip className="ml-3 mr-1" />
    <Tools names={["gridDown", "gridLeft", "gridYellow"]} />
    <Divider />
    <Tools names={["zigzag", "upDown"]} />
    <label className="relative mr-px flex shrink-0 items-center">
      <select aria-label="Analysis group" className="h-5 w-[159px] appearance-none border border-gray-300 bg-white px-1 text-[11px] text-gray-500">
        <option>Insert an Analysis Group</option>
      </select>
      <Caret className="absolute right-1 h-1 w-2" />
    </label>
    <Tools names={["saveGroup", "manageGroup"]} />
    <Divider />
    <Tools names={["handForm", "handFormDark"]} />
    <Divider />
    <Tools names={["calendarClock", "clockBars", "blackChart", "barChart", "candleChart"]} />
    <Divider />
    <Tools names={["narrow", "widen"]} />
    <Divider />
    <Tools names={["fit"]} />
    <Caret className="mx-[3px] h-1 w-2 shrink-0 text-[#000080]" />
    <Divider />
    <Tools names={["zoomIn", "zoomOut"]} />
    <Divider />
    <Tool name="pointer" active />
    <Tools names={["textTool"]} />
    <Divider />
    <Tools names={["hammer"]} />
    <Divider />
    <Tools names={["addGrid"]} />
    <Divider />
    <Tools names={["note"]} />
    <Grip className="ml-6 mr-1" />
    <Tools names={["pitchfork", "timeLines", "priceLines", "calcLines", "arcs", "dashFan", "extension", "speedLines", "gannFan", "horizontal", "vertical", "channel", "cycles", "pencil"]} />
    <Divider />
    <Tools names={["arc", "arrowDown", "arrowUp", "ellipse", "rectangle"]} />
    <button type="button" className="w-[23px] text-center text-[11px]">
      abc
    </button>
  </div>
);

/* ---------- time and sales ---------- */

type Sale = [price: string, size: number, tone: string];

const dim = "text-[#00b400]";
const bright = "text-[#00ff00]";
const down = "text-[#b40000]";
const block = "bg-white text-black";

const sales: Sale[] = [
  ...Array.from({ length: 9 }, (): Sale => ["3.59", 1, dim]),
  ["3.59+", 1, dim],
  ...[1, 3, 3, 2, 3, 8, 1, 11, 1, 2, 5, 2, 2, 1, 2].map((size): Sale => ["3.589", size, dim]),
];

const blockSales: Sale[] = [
  ["3.589", 11, dim], ["3.589", 10, dim], ["3.589", 10, dim], ["3.589", 11, dim], ["3.588", 40, dim],
  ["3.59", 10, down], ["3.607", 25, bright], ["3.603", 10, down], ["3.603", 15, dim], ["3.597", 12, dim],
  ["3.597", 18, dim], ["3.597", 25, dim], ["3.592", 15, block], ["3.592", 10, block], ["3.592", 10, block],
  ["3.59", 10, block], ["3.59", 10, block], ["3.587", 12, dim], ["3.586", 10, down], ["3.586", 10, down],
  ["3.586", 10, down], ["3.595", 10, down], ["3.595", 12, down], ["3.595", 10, down], ["3.59", 16, dim],
];

const SalesPanel = ({ rows, shaded }: { rows: Sale[]; shaded?: boolean }) => (
  <div className="flex flex-1 flex-col overflow-hidden bg-white font-['Liberation_Serif',serif] text-[17px]">
    <div className="h-[19px] shrink-0 border-b border-[#a0a0a0] bg-[#f0f0f0] text-center leading-[19px]">Symbol</div>
    <div className="h-[19px] shrink-0 text-center leading-[19px]">@NG</div>
    <div className="h-[5px] shrink-0 bg-[#f5f9fe]" />
    <table className="w-full table-fixed border-separate border-spacing-0 bg-black">
      <thead>
        <tr className="h-6 bg-[#f0f0f0] leading-[22px]">
          <th className="w-[60px] border-r border-t border-[#808080] p-0 font-normal">Price</th>
          <th className="border-r border-t border-[#808080] p-0 font-normal">S...</th>
        </tr>
      </thead>
      <tbody>
        {rows.map(([price, size, tone], i) => (
          <tr key={i} className={`h-[18px] leading-[18px] ${tone}`}>
            <td className={`p-0 pl-[5px] ${price === "3.59+" ? "bg-[#008000] text-white" : ""}`}>{price}</td>
            <td className={`p-0 pr-2 text-right ${shaded ? (tone === block ? "bg-[#e4e4e4]" : "bg-[#1a1a1a]") : ""}`}>{size}</td>
          </tr>
        ))}
      </tbody>
    </table>
  </div>
);

/* ---------- price matrix ---------- */

const matrixVolume = [
  17, 4, 5, 3, 16, 13, 13, 13, 11, 15, 22, 18, 38, 23, 28, 37, 29, 46, 43, 55, 45, 45, 19, 15, 13, 22, 22, 21, 29, 19,
  18, 18, 15, 12, 11, 19, 18, 18, 22, 16, 27, 18, 24, 19, 14, 8, 6, 6, 6, 5, 6, 6, 4, 5, 7,
];
const matrixHot = [1, 1, 1, 1, 1, 0, 0, 2, 3, 4, 7, 6, 7, 4, 3, 3, 3, 2, 2, 3, 2, 2, 6, 3, 1, 2, 1];
const matrixAsk = ["23", "29", "21", "35", "32", "37", "39", "37  (2)", "44  (2)", "15"];
const matrixBid = ["39", "46  (2)", "43  (2)", "66", "46", "48", "30", "41", "23", "47"];

const priceTone = (price: number) => {
  if (price > 3607) return "bg-[#808080] text-black";
  if (price === 3607) return "bg-black text-white shadow-[inset_0_2px_#00ff00]";
  if (price === 3590) return "bg-[#d8d800] text-black shadow-[inset_-2px_0_#00c000]";
  if (price === 3575) return "bg-black text-[#00ffff]";
  return "bg-black text-white";
};

const MatrixRow = ({ price }: { price: number }) => {
  const ask = price <= 3599 && price >= 3590 ? matrixAsk[3599 - price] : "";
  const bid = price <= 3589 && price >= 3580 ? matrixBid[3589 - price] : "";
  const volume = price <= 3607 ? matrixVolume[3607 - price] : 0;
  const hot = matrixHot[3607 - price] ?? 1;
  const fade: CSSProperties = {
    width: volume,
    background: `linear-gradient(to right, #20e020 0 ${hot}px, #b4ffb4 ${hot}px, #e6ffe6)`,
  };
  const cell = "whitespace-pre border-b border-[#333] p-0 text-center";
  return (
    <tr className="h-[14px] leading-[13px]">
      <td className={`${cell} border-r ${bid ? "bg-[#3c6cff]" : "bg-[#000080]"} ${price === 3589 ? "text-white" : ""}`}>{bid}</td>
      <td className={`${cell} border-r ${priceTone(price)}`}>{(price / 1000).toFixed(3)}</td>
      <td className={`${cell} border-r ${ask ? "bg-[#ff0000]" : "bg-[#800000]"} ${price === 3590 ? "text-white" : ""}`}>{ask}</td>
      <td className={`${cell} bg-black`}>
        <div className="h-[13px]" style={fade} />
      </td>
    </tr>
  );
};

const Matrix = () => (
  <div className="flex min-h-0 flex-1 flex-col bg-[#f0f0f0] font-['Liberation_Sans',sans-serif] text-[11px]">
    <table className="w-[170px] table-fixed border-separate border-spacing-0">
      <thead>
        <tr className="h-[18px] bg-[#f0f0f0]">
          <th className="w-16 border-b border-r border-[#a0a0a0] p-0 font-normal">Symbol</th>
          <th className="w-[49px] border-b border-r border-[#a0a0a0] p-0 font-normal">Last</th>
          <th className="border-b border-[#a0a0a0] p-0 font-normal">Net Chg</th>
        </tr>
      </thead>
      <tbody>
        <tr className="h-[17px] bg-white text-center text-[#008000]">
          <td className="border-r border-gray-200 p-0 text-black">@NG</td>
          <td className="border-r border-gray-200 p-0">3.59</td>
          <td className="p-0">0.025</td>
        </tr>
      </tbody>
    </table>
    <div className="min-h-0 flex-1 overflow-hidden">
      <table className="w-full table-fixed border-separate border-spacing-0">
        <colgroup>
          <col className="w-9" />
          <col className="w-[34px]" />
          <col className="w-[35px]" />
          <col />
        </colgroup>
        <thead>
          <tr className="h-[25px] bg-[#f0f0f0]">
            {["Bid...", "Pri...", "As..."].map((head) => (
              <th key={head} className="border-r border-t border-[#808080] p-0 font-normal">
                {head}
              </th>
            ))}
            <th className="border-t border-[#808080] p-0 pl-2 text-left font-normal">Vol Bars</th>
          </tr>
        </thead>
        <tbody>
          {Array.from({ length: 73 }, (_, i) => (
            <MatrixRow key={i} price={3625 - i} />
          ))}
        </tbody>
      </table>
    </div>
    <div className="h-[21px] shrink-0 whitespace-nowrap border-t border-gray-300 pl-1 font-['Open_Sans',sans-serif] leading-5">
      &lt;Connected&gt;&nbsp; SIMULATED ACCOUNT
    </div>
  </div>
);

/* ---------- order ticket ---------- */

const totals = [
  331, 78, 102, 69, 345, 234, 254, 248, 209, 293, 416, 355, 742, 424, 515, 706, 549, 878, 852, 962, 846, 852, 365, 286,
  259, 426, 413, 399, 545, 361, 339, 336, 291, 227, 215, 364, 336, 346, 416, 308, 507, 352, 456,
];
const offers = [23, 29, 21, 35, 32, 37, 39, 29, 40, 14];
const bids = [39, 37, 36, 66, 46, 48, 30, 41, 23, 47];

const ladderTone = (price: number) => {
  if (price === 3607) return "bg-white text-[#0000ff]";
  if (price === 3590) return "bg-[#00ff00]";
  if (price === 3565) return "bg-[#ffff00]";
  return "bg-[#f0f0f0]";
};

const LadderRow = ({ price }: { price: number }) => {
  const total = price <= 3607 ? totals[3607 - price] : null;
  const offer = price <= 3599 && price >= 3590 ? offers[3599 - price] : null;
  const bid = price <= 3589 && price >= 3580 ? bids[3589 - price] : null;
  const start = total ? Math.round(52 - total / 38) : 52;
  const bar: CSSProperties | undefined =
    total && total > 540 ? { background: `linear-gradient(to right, transparent ${start}px, #00dc00 ${start}px)` } : undefined;
  const side = "border-b border-r border-[#f4f4f4] p-0";
  return (
    <tr className="h-[18px] leading-[17px]">
      <td className={`${side} bg-[#e2e1dc]`} />
      <td className={`${side} ${bid ? "bg-[#0078b4] text-[#222]" : "bg-[#e2e1dc]"}`}>{bid}</td>
      <td className={`p-0 ${ladderTone(price)}`}>{price === 3590 ? "3590 / 30" : price}</td>
      <td className={`${side} border-l ${offer ? "bg-[#ff6464]" : "bg-[#e2e1dc]"}`}>{offer}</td>
      <td className={`${side} bg-[#e2e1dc]`} />
      <td className="p-0" style={bar}>
        {total}
      </td>
    </tr>
  );
};

const Spinner = ({ className = "" }: { className?: string }) => (
  <span className={`flex flex-col items-center justify-around border border-[#808080] bg-[#f0f0f0] ${className}`}>
    <svg viewBox="0 0 8 4" className="h-[3px] w-1.5">
      <path d="M0 4h8L4 0z" />
    </svg>
    <span className="h-px w-full bg-[#808080]" />
    <svg viewBox="0 0 8 4" className="h-[3px] w-1.5">
      <path d="M0 0h8L4 4z" />
    </svg>
  </span>
);

const field = "border border-[#808080] px-0.5 text-right";

const OrderTicket = () => (
  <aside className="absolute -top-0.5 bottom-1 right-0 flex w-[252px] flex-col overflow-hidden rounded-l-md border-y border-l border-[#444] bg-[linear-gradient(to_bottom,#ece6d0_0,#ece6d0_4%,#111_8%,#111_96%,#fbf7df_100%)] pl-1.5 text-[12px] shadow-lg">
    <div className="-ml-1.5 flex h-7 shrink-0 items-center whitespace-nowrap bg-linear-to-r from-[#f3eee0] via-[#fffbe6] to-[#c9c2a8] pl-2">
      <svg viewBox="0 0 14 16" className="h-4 w-3.5 shrink-0">
        <path d="M1 5l9-4 3 9-9 5z" fill="#e4e8ee" stroke="#99a" strokeWidth=".5" />
        <path d="M6 3l5-1 1 4-4 1z" fill="#2878b4" />
        <path d="M2 9l5-2M3 11l5-2M4 13l5-2" stroke="#d03030" />
      </svg>
      <h2 className="ml-1 w-[138px] shrink-0 text-[12px]">SIM:Natural Gas - Aug1...</h2>
      <div className="flex h-[19px] shrink-0 self-start rounded-b border border-[#777] text-[#444]">
        <button type="button" aria-label="Minimize ticket" className="flex w-[28px] items-center justify-center border-r border-[#777]">
          <span className="h-1 w-3 border border-[#555] bg-white" />
        </button>
        <button type="button" aria-label="Maximize ticket" className="flex w-[27px] items-center justify-center border-r border-[#777]">
          <span className="h-2.5 w-3 border-[3px] border-[#666] bg-white" />
        </button>
        <button type="button" aria-label="Close ticket" className="flex w-[46px] items-center justify-center">
          <svg viewBox="0 0 12 10" className="h-2.5 w-3">
            <path d="M2 1l8 8M10 1L2 9" stroke="#444" strokeWidth="4" />
            <path d="M2 1l8 8M10 1L2 9" stroke="white" strokeWidth="2" />
          </svg>
        </button>
      </div>
    </div>

    <div className="flex min-h-0 flex-1 flex-col bg-[#f0f0f0]">
      <div className="flex h-5 shrink-0 items-stretch border border-[#808080] bg-white text-center leading-[18px]">
        <button type="button" aria-label="Order settings" className="flex w-[19px] shrink-0 items-center justify-center border-r border-[#808080] bg-[#f0f0f0]">
          <svg viewBox="0 0 16 16" className="h-4 w-4">
            <path d="M1.500 5.500h10v9h-10zM3 8h1M6 8h4M3 11h1M6 11h4" fill="white" stroke="#444" />
            <path d="M5 4l4-2h6v5l-4-1-2 1z" fill="white" stroke="#444" />
            <path d="M12 1h3v6h-2z" fill="#5050a0" />
          </svg>
        </button>
        <button type="button" aria-label="Chart" className="flex w-[21px] shrink-0 items-center justify-center border-r border-[#808080] bg-[#f0f0f0]">
          <svg viewBox="0 0 16 16" className="h-4 w-4">
            <path d="M1 4l13-3 1 9-11 5z" fill="#3c9ae0" />
            <path d="M3 9l3-2 2 2 5-4" fill="none" stroke="white" />
          </svg>
        </button>
        <button type="button" aria-label="Chart options" className="flex w-[12px] shrink-0 items-center justify-center border-r border-[#808080] bg-[#f0f0f0]">
          <Caret className="h-1 w-1.5" />
        </button>
        <button type="button" className="w-[20px] shrink-0 border-r border-[#808080] bg-[#f0f0f0]">
          SP
        </button>
        <button type="button" aria-label="Spread options" className="flex w-[11px] shrink-0 items-center justify-center border-r border-[#808080] bg-[#f0f0f0]">
          <Caret className="h-1 w-1.5" />
        </button>
        <button type="button" className="w-[55px] shrink-0 border-r-2 border-[#808080] bg-[#dcdcf8]">
          Aug13
        </button>
        <button type="button" className="w-[55px] shrink-0 border-r-2 border-[#808080] bg-[#f0f0f0]">
          Sep13
        </button>
        <button type="button" className="flex-1 bg-[#f0f0f0] pl-2.5 text-left">
          Oct1
        </button>
        <button type="button" aria-label="Scroll months" className="flex w-[14px] shrink-0 items-center justify-center border-l border-[#808080] bg-white">
          <svg viewBox="0 0 4 8" className="h-2 w-1">
            <path d="M4 0v8L0 4z" />
          </svg>
        </button>
      </div>

      <div className="flex shrink-0 items-center pl-2.5 pt-[3px] text-[11px]">
        <label htmlFor="account" className="w-[53px] shrink-0">
          Account:
        </label>
        <select id="account" className="h-[19px] min-w-0 flex-1 appearance-none whitespace-nowrap border border-[#808080] bg-white">
          <option>sam007 (Practice - Not Reviewed)</option>
        </select>
        <span className="h-[19px] w-1 shrink-0 border-y border-[#808080] bg-[#e4e4e4]" />
      </div>

      <div className="flex shrink-0 items-start justify-between pt-[5px]">
        <div className="flex w-[106px] shrink-0 flex-col gap-1 pt-0.5">
          <label className="flex h-[15px] items-center justify-end">
            <span className="mr-1">L:</span>
            <input defaultValue="1" className={`h-[15px] w-9 bg-[#ffffe0] ${field}`} />
            <Spinner className="h-[15px] w-[14px]" />
            <span className="flex h-[15px] w-[22px] items-center justify-center border border-[#808080]">
              <Caret className="h-[5px] w-2.5" />
            </span>
          </label>
          <label className="flex h-[15px] items-center justify-end">
            <span className="mr-1">R:</span>
            <input defaultValue="2" className={`h-[15px] w-9 bg-white ${field}`} />
            <Spinner className="h-[15px] w-[14px]" />
            <span className="flex h-[15px] w-[22px] items-center justify-center border border-[#808080]">
              <Caret className="h-[5px] w-2.5" />
            </span>
          </label>
        </div>
        <dl className="-mb-6 grid w-[81px] grid-cols-[36px_1fr] content-start text-[11px] leading-[17px]">
          <dt>Net:</dt>
          <dd className="flex gap-5 whitespace-nowrap">
            <span>0</span>
            <span>(0-0)</span>
          </dd>
          <dt>UP&amp;L:</dt>
          <dd>0.00</dd>
          <dt>P&amp;L:</dt>
          <dd>0.00</dd>
        </dl>
      </div>

      <div className="mt-1 flex h-[23px] w-[160px] shrink-0 pl-[33px] font-['Liberation_Sans',sans-serif] font-bold">
        <button type="button" aria-label="Flatten position" className="mr-2 w-[23px] shrink-0 border border-[#808080]">
          <svg viewBox="0 0 21 21" className="h-[21px] w-[21px]">
            <path d="M2 2h17v17H2z" fill="white" stroke={RED} strokeWidth="2" />
            <path d="M4 5h5v5H4z" fill="#0000e0" />
            <path d="M12 5h5v5h-5z" fill={RED} />
            <path d="M4 12h13M7 17l3.500-4 3.500 4z" stroke="black" />
          </svg>
        </button>
        <button type="button" className="w-6 shrink-0 border border-[#808080] text-[20px] leading-[20px]">
          S
        </button>
        <button type="button" className="w-[25px] shrink-0 border-y border-r border-[#808080] text-[15px]">
          SL
        </button>
        <button type="button" aria-label="Stop options" className="flex w-[11px] shrink-0 items-center justify-center border-y border-r border-[#808080]">
          <Caret className="h-1 w-1.5 shrink-0" />
        </button>
        <button type="button" aria-label="Automation" className="flex w-[24px] shrink-0 items-center justify-center border-y border-r border-[#808080] bg-[#dcdcf8] text-[15px] text-[#f06420]">
          A
          <svg viewBox="0 0 9 18" className="h-[18px] w-[9px]" fill="none" stroke="#f06420">
            <circle cx="3" cy="3" r="2" />
            <circle cx="4" cy="9" r="1.500" />
            <circle cx="6" cy="15" r="2" />
          </svg>
        </button>
        <button type="button" aria-label="Automation options" className="flex w-3 shrink-0 items-center justify-center border-y border-r border-[#808080]">
          <Caret className="h-1 w-1.5 shrink-0" />
        </button>
      </div>

      <div className="flex shrink-0 items-end gap-2 pb-[9px] pl-px pt-1">
        <button type="button" aria-label="Cancel all" className="h-6 w-6 border border-[#808080]">
          <svg viewBox="0 0 22 22" className="h-[22px] w-[22px]">
            <circle cx="11" cy="11" r="8.500" fill="white" stroke={RED} strokeWidth="2" />
            <path d="M7 7l8 8M15 7l-8 8" stroke="black" strokeWidth="2" />
          </svg>
        </button>
        <div className="flex flex-col gap-[3px] text-[15px]">
          <label className="flex h-[19px] items-center">
            <span className="w-4 text-[12px]">L:</span>
            <input defaultValue="41" className={`h-[19px] w-[34px] bg-white ${field}`} />
            <Spinner className="h-[19px] w-[18px]" />
          </label>
          <label className="flex h-[19px] items-center">
            <span className="w-4 text-[12px]">S:</span>
            <input defaultValue="16" className={`h-[19px] w-[34px] bg-white ${field}`} />
            <Spinner className="h-[19px] w-[18px]" />
          </label>
        </div>
        <button type="button" className="-ml-1 h-[19px] w-[18px] border border-[#808080] font-['Liberation_Sans',sans-serif] text-[16px] font-bold leading-4">
          T
        </button>
      </div>

      <div className="flex h-5 shrink-0 items-stretch border-t border-gray-400">
        <span className="w-[63px] shrink-0 bg-white text-center leading-5">3607</span>
        <button type="button" aria-label="Reverse" className="flex w-10 shrink-0 items-center justify-center border border-[#808080]">
          <svg viewBox="0 0 16 16" className="h-4 w-4">
            <path d="M0 8h8v8H0z" fill="#0000ff" />
            <path d="M8 0h8v8H8z" fill={RED} />
          </svg>
        </button>
        <button type="button" aria-label="Scroll up" className="flex w-[98px] shrink-0 items-center justify-center border border-[#808080]">
          <svg viewBox="0 0 16 8" className="h-2 w-4">
            <path d="M0 8h16L8 0z" />
          </svg>
        </button>
        <span className="flex min-w-0 flex-1 items-center bg-white pl-0.5 text-[#008000]">
          <span className="mr-1.5 h-4 w-4 shrink-0 rounded border border-[#004000] bg-linear-to-br from-[#60ff60] to-[#008000]" />
          Open
        </span>
      </div>

      <div className="min-h-0 flex-1 overflow-hidden">
        <table className="w-[259px] table-fixed border-separate border-spacing-0 text-center text-[#222]">
          <thead>
            <tr className="h-[18px] whitespace-nowrap bg-[#f0f0f0] leading-[16px]">
              <th className="w-[28px] overflow-hidden border-b border-r border-t border-[#a0a0a0] p-0 text-[11px] font-normal">My B</th>
              <th className="w-[35px] border-b border-r border-t border-[#a0a0a0] p-0 font-normal">Bid</th>
              <th className="w-[85px] border-b border-r border-t border-[#a0a0a0] p-0 text-[14px] font-bold text-[#0000ff]">+25</th>
              <th className="w-[32px] border-b border-r border-t border-[#a0a0a0] p-0 text-[11px] font-normal">Offer</th>
              <th className="w-[27px] overflow-hidden border-b border-r border-t border-[#a0a0a0] p-0 text-[11px] font-normal">My C</th>
              <th className="w-[52px] border-b border-t border-[#a0a0a0] p-0 font-normal">Total</th>
            </tr>
          </thead>
        </table>
        <div className="flex h-[845px] flex-col justify-end overflow-hidden">
          <table className="-mb-2 w-[259px] table-fixed border-separate border-spacing-0 text-center text-[#222]">
            <colgroup>
              <col className="w-[28px]" />
              <col className="w-[35px]" />
              <col className="w-[85px]" />
              <col className="w-[32px]" />
              <col className="w-[27px]" />
              <col className="w-[52px]" />
            </colgroup>
            <tbody>
              {Array.from({ length: 48 }, (_, i) => (
                <LadderRow key={i} price={3612 - i} />
              ))}
            </tbody>
          </table>
        </div>
      </div>

      <div className="flex h-[21px] shrink-0 items-stretch border-t border-[#808080]">
        <span className="w-[63px] shrink-0 bg-white text-center leading-5">3531</span>
        <button type="button" aria-label="Scroll down" className="flex w-[133px] shrink-0 items-center justify-center border border-[#808080] bg-[#ececec]">
          <svg viewBox="0 0 18 9" className="h-[9px] w-[18px]">
            <path d="M0 0h18L9 9z" />
          </svg>
        </button>
        <span className="flex-1 bg-white pl-3 leading-5">29906</span>
      </div>
    </div>
    <div className="-ml-1.5 h-1.5 shrink-0 bg-[#fbf7df]" />
  </aside>
);

/* ---------- workspace tabs ---------- */

const tabs = ["$Bigger Picture NG", "$5 min Energies", "$NG ORBS", "Trade Manager", "Weekly", "$Financials", "$Swing"];
const navShapes = ["M4 3v8M11 3v8L6 7z", "M10 3v8L5 7z", "M6 3v8l5-4z", "M5 3v8l5-4zM12 3v8"];

const TabBar = () => (
  <footer className="flex h-[17px] shrink-0 items-stretch overflow-hidden border-t border-black bg-[#f0f0f0] font-['Liberation_Sans',sans-serif] text-[12px]">
    {navShapes.map((shape) => (
      <button key={shape} type="button" aria-label="Scroll tabs" className="w-[17px] border border-[#a0a0a0] border-t-white">
        <svg viewBox="0 0 15 14" className="h-[14px] w-[15px]">
          <path d={shape} fill="#505050" stroke="#505050" strokeWidth=".8" />
        </svg>
      </button>
    ))}
    <button type="button" className="flex bg-white font-bold">
      <svg viewBox="0 0 14 16" className="h-4 w-3.5">
        <path d="M0 0h2l7 16H0z" fill="#f0f0f0" />
        <path d="M2 0l7 16" stroke="black" />
      </svg>
      <span className="px-px text-[11px] leading-4">$NG2</span>
      <svg viewBox="0 0 24 16" className="h-4 w-6">
        <path d="M17 0l-7 16h14V0z" fill="#f0f0f0" />
        <path d="M17 0l-7 16M14 7l4 9" fill="none" stroke="black" />
      </svg>
    </button>
    {tabs.map((tab) => (
      <button key={tab} type="button" className="flex">
        <span className="leading-4">{tab}</span>
        <svg viewBox="0 0 24 16" className="h-4 w-6">
          {tab === "$Swing" ? (
            <path d="M15 0L8 16" stroke="black" />
          ) : (
            <path d="M8 0l7 16M8 16l3-8" fill="none" stroke="black" />
          )}
        </svg>
      </button>
    ))}
  </footer>
);

/* ---------- page ---------- */

const App = () => (
  <div className="flex h-screen flex-col overflow-hidden bg-[#f0f0f0] font-['Open_Sans',sans-serif] text-black">
    <TitleBar />
    <MenuBar />
    <ToolBar />

    <main className="relative grid min-h-0 flex-1 grid-cols-[375fr_302fr_327fr_373fr_116fr_427fr] grid-rows-[552fr_557fr]">
      <Frame strip={[[13, 124, STEEL], [113, 30, GREEN], [20, 30, SILVER]]} className="bg-[#f5f9fe] pb-1.5 pl-[9px] pr-2">
        <Chart
          label="Daily chart"
          view={[11, 83, 354, 535]}
          plot={[0, 70, 3, 2.8]}
          name="@NG - Daily"
          quote={<><span>B=3.589</span><span>A=3.5</span></>}
          more="..."
          studyTop={346}
          study={<><span>$Average True Range (1,1)</span><span className="text-[#ffff00]">0.0760</span><span>Average True Range (14, ...</span></>}
          axisX={991}
          axisY={1478}
          split={1002}
          levelEnd={984}
          candles={dailyCandles}
          bars={atrTops.map(([x, top]): Bar => [x, top, 1476, YELLOW])}
          lines={[[216, 75, 984, 262, MAGENTA]]}
          levels={[[188, "4.411", YELLOW], [253, "4.340", MAGENTA], [429, "4.148", YELLOW], [561, "4.005", CYAN], [715, "3.836", MAGENTA], [821, "3.718", YELLOW], [883, "3.651", CYAN], [998, "3.527", YELLOW]]}
          prices={[[199, "4.400"], [381, "4.200"], [563, "4.000"], [747, "3.800"], [929, "3.600"], [1112, "0.300"], [1185, "0.250"], [1258, "0.200"], [1330, "0.150"], [1404, "0.100"]]}
          times={[[53, ""], [128, ""], [203, ""], [306, "May"], [353, ""], [428, ""], [503, ""], [578, ""], [652, "Jun"], [728, ""], [803, ""], [878, ""], [953, "Jul"]]}
          tags={[[944, "3.590", GREEN], [1389, "0.113", RED], [1442, "0.076", YELLOW]]}
        >
          <polyline points={atrAverage} fill="none" stroke={RED} vectorEffect="non-scaling-stroke" />
        </Chart>
      </Frame>

      <Frame strip={[[13, 101, "#9ab3d0"], [69, 29, GREEN], [21, 30, SILVER]]} stripClass="h-[5px]" className="bg-[#b4b4b4] pb-0.5 pl-[5px] pr-[7px]">
        <Chart
          label="60 minute chart"
          view={[382, 81, 286, 523]}
          plot={[370, 70, 2.45, 2.8]}
          name="@NG - 60 min"
          quote={<span className="ml-2">...</span>}
          axisX={645}
          axisY={1443}
          candles={hourCandles}
          bodyWidth={8}
          lines={[[92, 70, 640, 767, MAGENTA], [499, 70, 640, 199, MAGENTA], [180, 1250, 640, 689, "white"]]}
          prices={[[96, "3.740"], [222, "3.720"], [345, "3.700"], [471, "3.680"], [597, "3.660"], [723, "3.640"], [849, "3.620"], [972, "3.600"], [1098, "3.580"], [1224, "3.560"], [1350, "3.540"]]}
          times={[[268, "6/28"], [454, ""], [503, "Jul"]]}
          tags={[[1041, "3.590", RED]]}
        />
        <div className="flex h-[18px] shrink-0 items-center justify-between bg-[#f0f0f0] px-1.5">
          <svg viewBox="0 0 4 8" className="h-2 w-1"><path d="M4 0v8L0 4z" fill="#404040" /></svg>
          <span className="ml-auto mr-2 h-4 w-[15px] rounded-xs border border-gray-400 bg-linear-to-b from-white to-gray-300" />
          <svg viewBox="0 0 4 8" className="h-2 w-1"><path d="M0 0v8l4-4z" fill="#404040" /></svg>
        </div>
      </Frame>

      <Frame strip={[[13, 109, STEEL], [83, 30, SILVER], [20, 30, SILVER]]} className="bg-[#f5f9fe] pb-[5px] pl-2 pr-1.5">
        <Chart
          label="15 minute chart"
          view={[687, 83, 309, 536]}
          plot={[370, 70, 2.45, 2.8]}
          name="@NG - 15 min"
          quote={<span>B=3. ...</span>}
          axisX={1449}
          axisY={1485}
          levelEnd={1443}
          candles={quarterCandles}
          bodyWidth={8}
          levels={[[1367, "3.537", "white"]]}
          prices={[[205, "3.600"], [575, "3.580"], [760, "3.570"], [944, "3.560"], [1129, "3.550"], [1314, "3.540"]]}
          times={[[903, "Jul"], [1101, "4:00"], [1297, "8:00"]]}
          tags={[[395, "3.590", RED]]}
        />
      </Frame>

      <Frame strip={[[13, 124, STEEL], [115, 29, GREEN], [20, 30, SILVER]]} className="bg-[#f5f9fe] px-[7px] pb-1.5">
        <Chart
          label="55 tick chart"
          view={[1013, 83, 355, 535]}
          plot={[1000, 70, 3, 2.8]}
          name="@NG - 55 Tick Bar"
          quote={<><span>B=3.589</span><span className="ml-1">...</span></>}
          axisX={1000}
          axisY={1482}
          bars={tickBars}
          barWidth={6}
          lines={[[298, 1478, 992, 270, MAGENTA]]}
          prices={[[144, "3.605"], [309, "3.600"], [477, "3.595"], [810, "3.585"], [975, "3.580"], [1142, "3.575"], [1308, "3.570"]]}
          times={[[285, "9:06"], [524, "9:30"], [765, "9:55"]]}
          tags={[[646, "3.590", GREEN]]}
        />
      </Frame>

      <Frame strip={[[12, 33, STEEL], [0, 30, GREEN]]} stripClass="h-[6px]" className="bg-[#f5f9fe] px-[5px] pb-2">
        <SalesPanel rows={sales} />
      </Frame>

      <Frame strip={[[13, 400, STEEL]]} stripClass="h-[6px]" className="row-span-2 bg-[#f5f9fe] pb-1.5 pl-[5px]">
        <Matrix />
      </Frame>

      <Frame strip={[[13, 123, STEEL], [114, 29, GREEN], [20, 30, SILVER]]} stripClass="h-[9px]" className="bg-[#f5f9fe] px-[9px] pb-2.5">
        <Chart
          label="240 minute chart"
          view={[11, 637, 353, 534]}
          plot={[0, 620, 3, 2.703]}
          name="@NG - 240 min"
          quote={<><span>B=3.589</span><span>A= ...</span></>}
          axisX={988}
          axisY={1439}
          levelEnd={981}
          candles={fourHourCandles}
          bodyWidth={15}
          lines={[[124, 84, 981, 1141, MAGENTA], [150, 84, 981, 937, MAGENTA], [364, 84, 981, 430, MAGENTA], [670, 1330, 981, 981, "white"]]}
          levels={[[174, "3.899", "#0000ff"], [436, "3.821", "#0000ff"], [706, "3.741", "#0000ff"], [936, "3.673", "#0000ff"], [1150, "3.610", "#0000ff"], [1012, "3.651", "white"], [1136, "3.614", "#ff8000"], [1396, "3.537", "#ff8000"]]}
          prices={[[168, "3.900"], [338, "3.850"], [506, "3.800"], [676, "3.750"], [844, "3.700"], [1014, "3.650"], [1182, "3.600"], [1352, "3.550"]]}
          times={[[187, "6/23"], [334, "6/25"], [460, "6/26"], [586, "6/27"], [712, "6/28"], [860, "Jul"]]}
          tags={[[1222, "3.590", GREEN]]}
        />
      </Frame>

      <Frame strip={[[13, 210, STEEL], [285, 30, GREEN], [20, 30, SILVER]]} stripClass="h-[10px]" className="col-span-2 bg-[#f5f9fe] pb-2 pl-1.5 pr-[7px]">
        <Chart
          label="5 minute chart"
          view={[383, 638, 612, 535]}
          plot={[370, 620, 2.45, 2.703]}
          name="@NG - 5 min"
          quote={<><span>B=3.589</span><span>A=3.590</span><span className="text-[#00e61e]">O=3.547</span><span>Hi=3.607</span><span>Lo=3.531</span><span>V=29,906</span></>}
          studyTop={346}
          study={<><span>Hubert Senters Climactic Volume (true,10,green,red,magenta,yellow,darkgray)</span><span className="text-[#808080]">338.00</span></>}
          axisX={1410}
          axisY={1442}
          split={982}
          levelEnd={1404}
          candles={fiveMinCandles}
          bodyWidth={18}
          bars={volumeBars}
          lines={[[746, 898, 1254, 84, MAGENTA]]}
          levels={[[907, "3.537", "white"]]}
          prices={[[168, "3.600"], [403, "3.580"], [519, "3.570"], [636, "3.560"], [755, "3.550"], [871, "3.540"], [1042, ""], [1082, "1,800.00"], [1123, ""], [1160, "1,400.00"], [1200, ""], [1239, "1,000.00"], [1280, ""], [1317, "600.00"], [1399, "200.00"]]}
          times={[[195, "6:30"], [328, "7:00"], [460, "7:30"], [592, "8:00"], [725, "8:30"], [857, "9:00"], [989, "9:30"], [1120, "10:00"], [1253, "10:30"]]}
          tags={[[292, "3.590", RED], [1373, "338.00", GRAY]]}
        />
      </Frame>

      <Frame strip={[[13, 125, STEEL], [115, 30, GREEN], [20, 30, SILVER]]} className="bg-[#f5f9fe] pb-[11px] pl-2 pr-1">
        <Chart
          label="3 line break chart"
          view={[1014, 635, 357, 535]}
          plot={[1000, 620, 3, 2.703]}
          name="@NG - 3 LB, 1 tick"
          quote={<><span>B=3.589</span><span>. ...</span></>}
          axisX={1009}
          axisY={1437}
          prices={[[208, "3.600"], [568, "3.580"], [747, "3.570"], [925, "3.560"], [1104, "3.550"], [1282, "3.540"]]}
          times={[[285, "8:52"], [524, ""], [765, "9:30"]]}
          tags={[[392, "3.590", "#80ff80"]]}
        >
          {lineBreaks.map(([color, points]) => (
            <polyline key={points} points={points} fill="none" stroke={color} strokeWidth={2} vectorEffect="non-scaling-stroke" />
          ))}
        </Chart>
      </Frame>

      <Frame strip={[[13, 33, STEEL], [0, 30, GREEN]]} stripClass="h-[8px]" className="bg-[#f5f9fe] px-[5px] pb-2">
        <SalesPanel rows={blockSales} shaded />
      </Frame>

      <OrderTicket />
    </main>

    <TabBar />
  </div>
);

export default App;
